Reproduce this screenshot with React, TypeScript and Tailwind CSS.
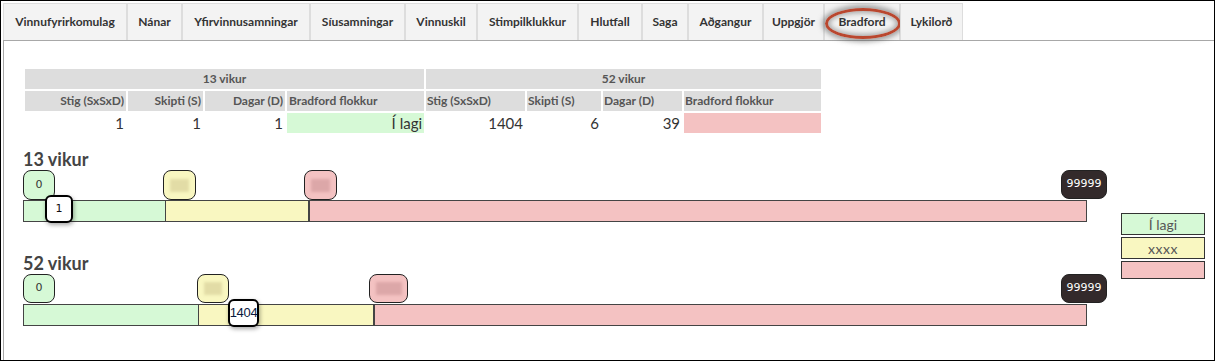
import React from "react";

const tabs: [string, number][] = [
  ["Vinnufyrirkomulag", 124],
  ["Nánar", 55],
  ["Yfirvinnusamningar", 128],
  ["Síusamningar", 95],
  ["Vinnuskil", 72],
  ["Stimpilklukkur", 101],
  ["Hlutfall", 64],
  ["Saga", 46],
  ["Aðgangur", 75],
  ["Uppgjör", 61],
  ["Bradford", 76],
  ["Lykilorð", 63],
];

function Marker({
  left,
  width,
  height,
  color,
  children,
}: {
  left: number;
  width: number;
  height: number;
  color: string;
  children?: React.ReactNode;
}) {
  return (
    <div
      className="absolute top-0 flex items-center justify-center rounded-[8px] border border-[#222] box-border"
      style={{ left, width, height, background: color }}
    >
      {children}
    </div>
  );
}

function Blur({ color, w }: { color: string; w: number }) {
  return <span className="block h-[13px] blur-[1.5px]" style={{ width: w, background: color }} />;
}

function Track({
  green,
  yellow,
  yLeft,
  yW,
  pLeft,
  pW,
  pBlur,
  valLeft,
  valW,
  val,
  valClass,
  mh,
}: {
  green: number;
  yellow: number;
  yLeft: number;
  yW: number;
  pLeft: number;
  pW: number;
  pBlur: number;
  valLeft: number;
  valW: number;
  val: string;
  valClass: string;
  mh: number;
}) {
  return (
    <div className="relative w-[1064px] pt-[30px]">
      <Marker left={0} width={32} height={mh} color="#d6f9d6">
        <span className="text-[11px] text-[#333] font-['DejaVu_Sans',sans-serif]">0</span>
      </Marker>
      <Marker left={yLeft} width={yW} height={mh} color="#f9f7c1">
        <Blur color="#e2dca6" w={yW - 14} />
      </Marker>
      <Marker left={pLeft} width={pW} height={mh} color="#f4c2c2">
        <Blur color="#dca7a8" w={pBlur} />
      </Marker>
      <Marker left={1038} width={46} height={29} color="#332a2b">
        <span className="text-[11px] text-white font-['DejaVu_Sans',sans-serif]">99999</span>
      </Marker>
      <div className="flex h-[22px] border border-[#444] box-border">
        <div className="bg-[#d6f9d6]" style={{ width: green }} />
        <div className="bg-[#f9f7c1] border-l border-[#444] box-border" style={{ width: yellow }} />
        <div className="flex-1 bg-[#f4c2c2] border-l-2 border-[#444]" />
      </div>
      <div
        className="absolute top-[25px] h-[28px] flex items-center justify-center rounded-[6px] border-2 border-black bg-white box-border shadow-[1px_2px_4px_rgba(0,0,0,0.35)]"
        style={{ left: valLeft, width: valW }}
      >
        <span className={valClass}>{val}</span>
      </div>
    </div>
  );
}

export default function App() {
  const th = "h-[20px] bg-[#dddddd] text-[12px] font-bold text-[#555] p-0 leading-[20px]";
  const td = "h-[20px] p-0 text-[15px] text-[#333] leading-[20px] text-right pr-[2px]";
  return (
    <div className="w-[1215px] h-[361px] border border-black box-border bg-white overflow-hidden font-['Lato',sans-serif] pl-[2px] pt-[2px]">
      <div className="flex h-[37px]">
        {tabs.map(([t, w]) => (
          <div
            key={t}
            className="relative flex items-center justify-center bg-[#f3f3f3] border-t border-x border-[#dddddd] box-border text-[12px] font-bold text-[#333] shrink-0"
            style={{ width: w }}
          >
            {t}
            {t === "Bradford" && (
              <div className="absolute left-[0px] top-[4px] w-[76px] h-[31px] rounded-[50%] border-[3px] border-[#b9472f] shadow-[0_0_5px_3px_rgba(80,80,80,0.5),inset_0_0_5px_2px_rgba(80,80,80,0.45)]" />
            )}
          </div>
        ))}
      </div>
      <div className="h-[321px] border-t border-l border-[#a8a8a8] box-border pl-[19px] pt-[26px]">
        <table className="table-fixed border-separate border-spacing-[2px] w-[800px]">
          <colgroup>
            <col style={{ width: 101 }} />
            <col style={{ width: 75 }} />
            <col style={{ width: 80 }} />
            <col style={{ width: 137 }} />
            <col style={{ width: 99 }} />
            <col style={{ width: 74 }} />
            <col style={{ width: 79 }} />
            <col style={{ width: 137 }} />
          </colgroup>
          <thead>
            <tr>
              <th colSpan={4} className={th + " text-center"}>13 vikur</th>
              <th colSpan={4} className={th + " text-center"}>52 vikur</th>
            </tr>
            <tr>
              <th className={th + " text-right pr-[2px]"}>Stig (SxSxD)</th>
              <th className={th + " text-right pr-[2px]"}>Skipti (S)</th>
              <th className={th + " text-right pr-[2px]"}>Dagar (D)</th>
              <th className={th + " text-left pl-[2px]"}>Bradford flokkur</th>
              <th className={th + " text-left pl-[1px]"}>Stig (SxSxD)</th>
              <th className={th + " text-left pl-[1px]"}>Skipti (S)</th>
              <th className={th + " text-left pl-[1px]"}>Dagar (D)</th>
              <th className={th + " text-left pl-[1px]"}>Bradford flokkur</th>
            </tr>
          </thead>
          <tbody>
            <tr>
              <td className={td}>1</td>
              <td className={td}>1</td>
              <td className={td}>1</td>
              <td className={td + " bg-[#d6f9d6]"}>Í lagi</td>
              <td className={td}>1404</td>
              <td className={td}>6</td>
              <td className={td}>39</td>
              <td className={td + " bg-[#f4c2c2]"}></td>
            </tr>
          </tbody>
        </table>
        <div className="flex">
          <div className="flex flex-col">
            <div className="mt-[13px] h-[22px] leading-[22px] text-[18px] font-bold text-[#444]">13 vikur</div>
            <Track
              green={141}
              yellow={143}
              yLeft={140}
              yW={33}
              pLeft={281}
              pW={33}
              pBlur={19}
              valLeft={22}
              valW={28}
              val="1"
              valClass="text-[11px] text-[#111] font-['DejaVu_Sans',sans-serif]"
              mh={30}
            />
            <div className="mt-[30px] h-[22px] leading-[22px] text-[18px] font-bold text-[#444]">52 vikur</div>
            <Track
              green={174}
              yellow={175}
              yLeft={174}
              yW={32}
              pLeft={346}
              pW={39}
              pBlur={26}
              valLeft={205}
              valW={31}
              val="1404"
              valClass="text-[13px] text-[#0a1a40] font-['Liberation_Sans',sans-serif] tracking-[-0.3px]"
              mh={29}
            />
          </div>
          <div className="ml-[34px] mt-[78px] flex flex-col gap-[2px]">
            <div className="w-[84px] h-[22px] bg-[#d6f9d6] border border-[#333] box-border flex items-center justify-center text-[14px] text-[#555]">
              Í lagi
            </div>
            <div className="w-[84px] h-[22px] bg-[#f9f7c1] border border-[#333] box-border flex items-center justify-center text-[14px] tracking-[0.5px] text-[#555]">
              xxxx
            </div>
            <div className="w-[84px] h-[18px] bg-[#f4c2c2] border border-[#333] box-border" />
          </div>
        </div>
      </div>
    </div>
  );
}
